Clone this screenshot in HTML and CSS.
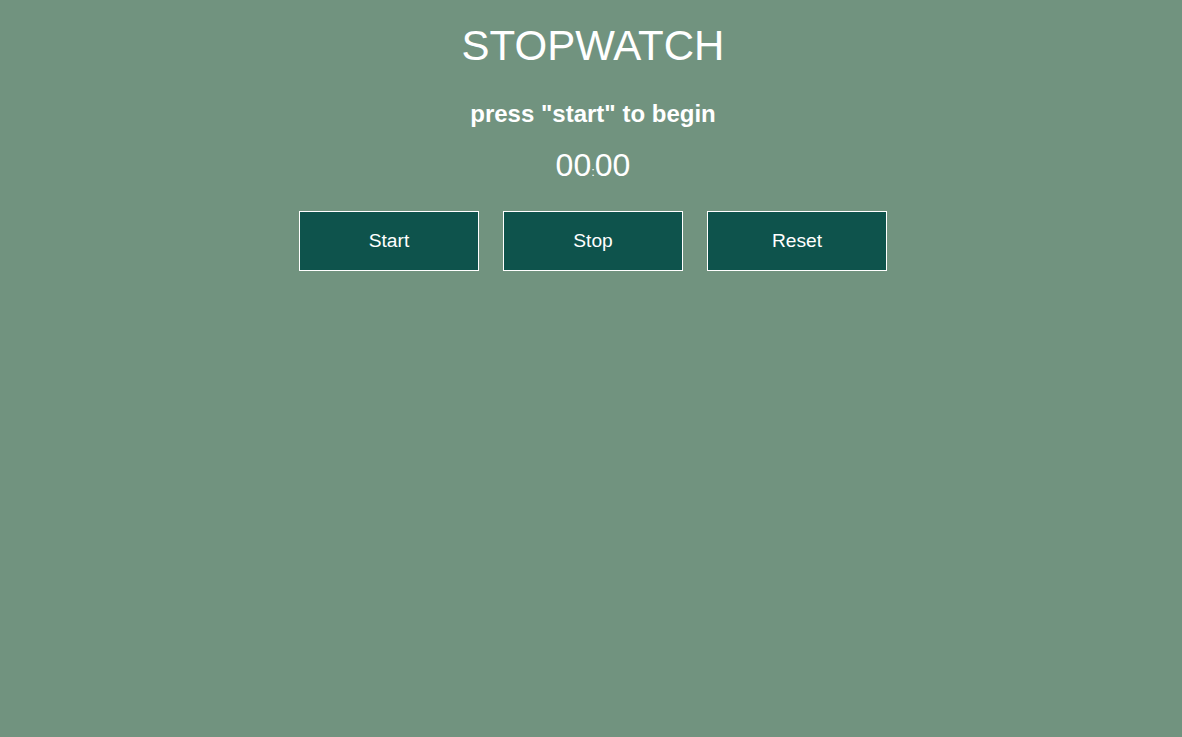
FILE: index.html
```html
<!DOCTYPE html>
<html lang="en">
<head>
<meta charset="utf-8">
<title>Stopwatch</title>
<link rel="stylesheet" href="styles.css">
</head>
<body>
<div class="wrapper">
  <h1 class="title">STOPWATCH</h1>
  <h2 class="subtitle">press "start" to begin</h2>
  <p class="timer"><span class="digits">00</span>:<span class="digits">00</span></p>
  <div class="controls">
    <button class="btn">Start</button>
    <button class="btn">Stop</button>
    <button class="btn">Reset</button>
  </div>
</div>
</body>
</html>
```
FILE: styles.css
```css
html, body {
  margin: 0;
  padding: 0;
}
body {
  background: #71937f;
  color: #ffffff;
  font-family: "Liberation Sans", Arial, sans-serif;
  min-height: 737px;
}
.wrapper {
  display: flex;
  flex-direction: column;
  align-items: center;
  text-align: center;
  padding-left: 4px;
  padding-top: 22px;
}
.title {
  margin: 0;
  font-size: 42px;
  font-weight: 400;
  line-height: 48px;
}
.subtitle {
  margin: 30px 0 0;
  font-size: 24px;
  font-weight: 700;
  line-height: 28px;
}
.timer {
  margin: 19px 0 0;
  font-size: 13px;
  line-height: 15px;
}
.digits {
  font-size: 32px;
  line-height: 37px;
}
.controls {
  display: flex;
  gap: 24px;
  margin-top: 27px;
}
.btn {
  width: 180px;
  height: 60px;
  box-sizing: border-box;
  background: #0e534c;
  color: #ffffff;
  border: 1px solid #ffffff;
  border-radius: 0;
  font-family: "Liberation Sans", Arial, sans-serif;
  font-size: 19.2px;
  padding: 0;
  cursor: pointer;
}
```
